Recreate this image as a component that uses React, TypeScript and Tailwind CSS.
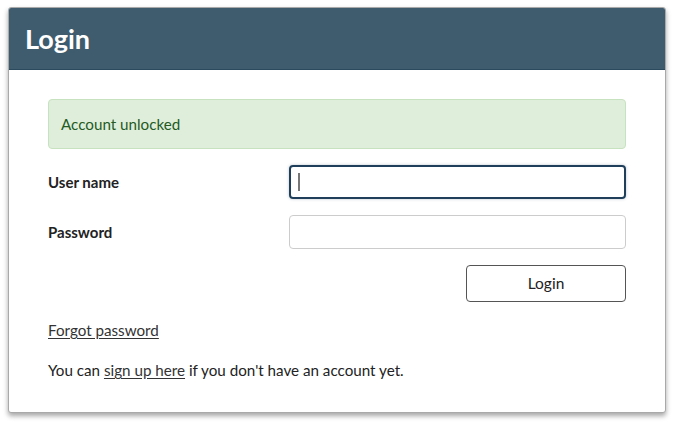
import React from "react";

export default function App() {
  const font = { fontFamily: '"Source Sans Pro", Lato, "Noto Sans", sans-serif' };
  return (
    <div className="w-[676px] h-[423px] bg-white pt-[7px] pl-[8px]" style={font}>
      <div className="w-[658px] h-[406px] rounded-[3px] border border-[#a9a9a9] bg-white shadow-[0_3px_5px_rgba(0,0,0,0.35)] overflow-hidden flex flex-col">
        <div className="h-[62px] bg-[#3f5c6e] border-b border-[#2c4a5e] flex items-center px-[16px]">
          <h1 className="text-white text-[27px] font-bold leading-none">Login</h1>
        </div>
        <div className="px-[39px] pt-[29px] flex flex-col">
          <div className="h-[50px] rounded-[4px] border border-[#c6e2be] bg-[#dfeedb] flex items-center px-[12px] text-[15.2px] text-[#245a24]">
            Account unlocked
          </div>
          <div className="mt-[16px] flex items-center h-[34px]">
            <label className="w-[241px] text-[15px] font-bold text-[#222]">User name</label>
            <div className="flex-1 h-[34px] rounded-[4px] border-2 border-[#1f3f5a] shadow-[0_0_3px_rgba(31,63,90,0.3)] flex items-center px-[7px]">
              <div className="w-[2px] h-[18px] bg-[#777]"></div>
            </div>
          </div>
          <div className="mt-[16px] flex items-center h-[34px]">
            <label className="w-[241px] text-[15px] font-bold text-[#222]">Password</label>
            <div className="flex-1 h-[34px] rounded-[4px] border border-[#cccccc]"></div>
          </div>
          <div className="mt-[16px] flex justify-end">
            <button className="w-[160px] h-[37px] rounded-[4px] border border-[#555] bg-white text-[15.5px] text-[#222]">
              Login
            </button>
          </div>
          <a className="mt-[17px] text-[15.2px] leading-[22px] text-[#333] underline underline-offset-2 self-start">Forgot password</a>
          <p className="mt-[18px] text-[15.2px] leading-[22px] text-[#222]">
            You can <a className="underline underline-offset-2 text-[#333]">sign up here</a> if you don't have an account yet.
          </p>
        </div>
      </div>
    </div>
  );
}
